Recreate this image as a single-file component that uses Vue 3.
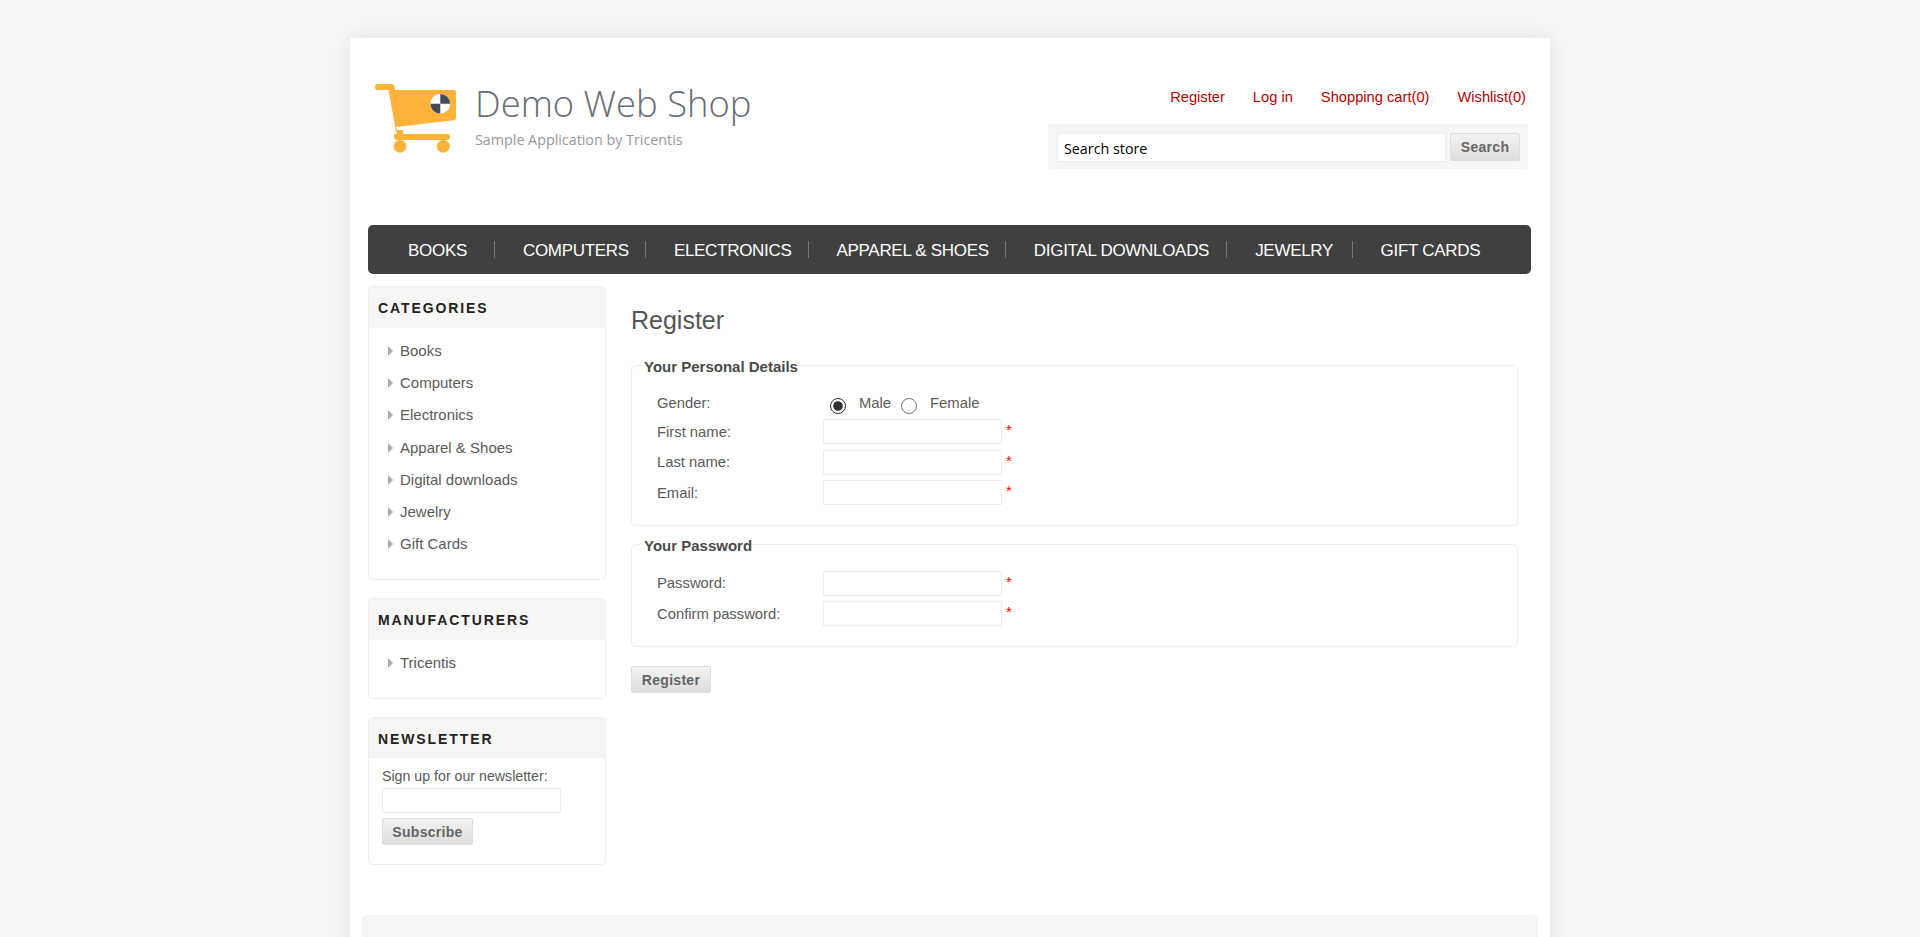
<template>
  <div class="page-frame">
    <div class="shop-page">
      <header class="shop-header">
        <div class="logo">
          <svg class="cart" width="82" height="70" viewBox="0 0 82 70">
            <path fill="#ffb239" d="M2.5 0H16q3 0 3.600 3L20 6H79q2 0 2 2V34q0 2-2 2.200L21 43l1 3 H28V50H72q3 0 3 3t-3 3H22q-3 0-3-3V50h2.500L13.500 6H2.500Q0 6 0 3t2.500-3Z" />
            <circle fill="#ffb239" cx="25" cy="62.300" r="6.400" />
            <circle fill="#ffb239" cx="68.300" cy="62.300" r="6.400" />
            <circle fill="#fff" cx="65.300" cy="19.700" r="9.800" />
            <path fill="#444c5a" d="M65.300 19.700V9.900A9.800 9.800 0 0 1 75.100 19.700ZM65.300 19.700V29.500A9.800 9.800 0 0 1 55.500 19.700Z" />
          </svg>
          <div class="logo-text">
            <div class="logo-title">Demo Web Shop</div>
            <div class="logo-sub">Sample Application by Tricentis</div>
          </div>
        </div>
        <div class="header-right">
          <ul class="header-links">
            <li v-for="link in headerLinks" :key="link"><a href="#">{{ link }}</a></li>
          </ul>
          <div class="search-box">
            <input class="search-input" type="text" value="Search store" />
            <button class="btn search-btn" type="button">Search</button>
          </div>
        </div>
      </header>

      <nav class="top-menu">
        <a v-for="item in menu" :key="item" class="top-item" href="#">{{ item }}</a>
      </nav>

      <div class="columns">
        <aside class="side">
          <section class="block categories">
            <h3 class="block-title">Categories</h3>
            <ul class="side-list">
              <li v-for="c in categories" :key="c"><a href="#">{{ c }}</a></li>
            </ul>
          </section>
          <section class="block manufacturers">
            <h3 class="block-title">Manufacturers</h3>
            <ul class="side-list">
              <li><a href="#">Tricentis</a></li>
            </ul>
          </section>
          <section class="block newsletter">
            <h3 class="block-title">Newsletter</h3>
            <div class="news-body">
              <label class="news-label">Sign up for our newsletter:</label>
              <input class="field news-field" type="text" />
              <button class="btn news-btn" type="button">Subscribe</button>
            </div>
          </section>
        </aside>

        <main class="center">
          <h1 class="page-title">Register</h1>
          <fieldset class="group personal">
            <legend>Your Personal Details</legend>
            <div class="row gender-row">
              <label class="row-label">Gender:</label>
              <div class="gender">
                <input type="radio" name="gender" checked />
                <span class="gender-text">Male</span>
                <input type="radio" name="gender" />
                <span class="gender-text">Female</span>
              </div>
            </div>
            <div v-for="f in personalFields" :key="f" class="row">
              <label class="row-label">{{ f }}:</label>
              <input class="field" type="text" />
              <span class="required">*</span>
            </div>
          </fieldset>
          <fieldset class="group password">
            <legend>Your Password</legend>
            <div v-for="f in passwordFields" :key="f" class="row">
              <label class="row-label">{{ f }}:</label>
              <input class="field" type="password" />
              <span class="required">*</span>
            </div>
          </fieldset>
          <button class="btn register-btn" type="button">Register</button>
        </main>
      </div>

      <div class="shop-footer"></div>
    </div>
  </div>
</template>

<script setup>
const headerLinks = ['Register', 'Log in', 'Shopping cart(0)', 'Wishlist(0)']
const menu = ['BOOKS', 'COMPUTERS', 'ELECTRONICS', 'APPAREL & SHOES', 'DIGITAL DOWNLOADS', 'JEWELRY', 'GIFT CARDS']
const categories = ['Books', 'Computers', 'Electronics', 'Apparel & Shoes', 'Digital downloads', 'Jewelry', 'Gift Cards']
const personalFields = ['First name', 'Last name', 'Email']
const passwordFields = ['Password', 'Confirm password']
</script>

<style>
html, body {
  background: #f6f6f4;
  overflow: hidden;
  height: 937px;
}
</style>

<style scoped>
.page-frame {
  width: 1900px;
  height: 937px;
  padding-top: 38px;
  box-sizing: border-box;
  overflow: hidden;
  font-family: "Liberation Sans", Arial, sans-serif;
  font-size: 15px;
  color: #5a5a5a;
}

.shop-page {
  width: 1200px;
  margin: 0 auto;
  background: #fff;
  box-shadow: 0 0 24px rgba(0, 0, 0, 0.09);
  height: 1000px;
  box-sizing: border-box;
  padding: 0 12px;
  display: flow-root;
}

.shop-header {
  display: flex;
  justify-content: space-between;
  height: 187px;
  padding: 0 10px 0 13px;
}

.logo {
  display: flex;
  margin-top: 46px;
  height: 70px;
}

.logo-text {
  margin-left: 18px;
}

.logo-title {
  font-family: "Open Sans", sans-serif;
  font-weight: 300;
  font-size: 36.400px;
  line-height: 48px;
  margin-top: -5px;
  color: #686d76;
}

.logo-sub {
  font-family: "Open Sans", sans-serif;
  font-size: 14.300px;
  line-height: 20px;
  margin-top: 3px;
  color: #96999d;
}

.header-right {
  width: 480px;
  display: flex;
  flex-direction: column;
  align-items: flex-end;
}

.header-links {
  list-style: none;
  margin: 50px 2px 0 0;
  padding: 0;
  display: flex;
  gap: 28px;
  font-size: 14.700px;
  line-height: 18px;
}

.header-links a {
  color: #bb0000;
  text-decoration: none;
}

.search-box {
  width: 480px;
  height: 45px;
  margin-top: 18px;
  box-sizing: border-box;
  background: #f6f6f4;
  border-radius: 3px;
  padding: 9px 8px 0 9px;
  display: flex;
  align-items: flex-start;
  gap: 4px;
}

.search-input {
  width: 389px;
  height: 29px;
  box-sizing: border-box;
  border: 1px solid #eee;
  background: #fff;
  padding: 1px 6px 0;
  margin: 0;
  font-family: "Open Sans", sans-serif;
  font-size: 14.300px;
  color: #000;
  outline: none;
}

.btn {
  box-sizing: border-box;
  border: 1px solid #ddd;
  border-radius: 2px;
  background: linear-gradient(#f2f2f2, #dedede);
  font-family: "Liberation Sans", Arial, sans-serif;
  font-weight: 700;
  font-size: 14px;
  letter-spacing: 0.3px;
  color: #666;
  padding: 0;
  margin: 0;
}

.search-btn {
  width: 70px;
  height: 28px;
}

.top-menu {
  height: 49px;
  background: #404040;
  border-radius: 5px;
  margin: 0 7px 0 6px;
  padding-left: 12px;
  display: flex;
  align-items: center;
}

.top-item {
  color: #fff;
  text-decoration: none;
  font-size: 17px;
  letter-spacing: -0.3px;
  line-height: 15px;
  padding: 2px 16px 0 28px;
  border-right: 1px solid #777;
}

.top-item:first-child {
  padding-right: 27px;
}

.top-item:nth-child(5) {
  padding-right: 17px;
}

.top-item:nth-child(6) {
  padding-right: 18.500px;
}

.top-item:last-child {
  border-right: 0;
}

.columns {
  display: flex;
  margin: 12px 6px 0;
  gap: 25px;
}

.side {
  width: 238px;
  flex: none;
  display: flex;
  flex-direction: column;
  gap: 18px;
}

.block {
  box-sizing: border-box;
  border: 1px solid #eee;
  border-radius: 5px;
  overflow: hidden;
}

.categories {
  height: 294px;
}

.manufacturers {
  height: 101px;
}

.newsletter {
  height: 148px;
}

.block-title {
  margin: 0;
  height: 41px;
  line-height: 43px;
  background: #f6f6f4;
  padding-left: 9px;
  font-size: 14px;
  font-weight: 700;
  letter-spacing: 1.900px;
  text-transform: uppercase;
  color: #222;
}

.newsletter .block-title {
  height: 40px;
}

.side-list {
  list-style: none;
  margin: 0;
  padding: 7px 0 0 31px;
}

.side-list li {
  height: 32.200px;
  line-height: 32px;
  position: relative;
}

.side-list li::before {
  content: "";
  position: absolute;
  left: -12px;
  top: 11px;
  border-left: 5px solid #aaa;
  border-top: 5px solid transparent;
  border-bottom: 5px solid transparent;
}

.side-list a {
  color: #5a5a5a;
  text-decoration: none;
}

.news-body {
  padding: 10px 0 0 13px;
  display: flex;
  flex-direction: column;
  align-items: flex-start;
}

.news-label {
  font-size: 14.200px;
  line-height: 16px;
}

.news-body .news-field {
  margin-top: 4px;
}

.news-btn {
  margin-top: 5px;
  width: 91px;
  height: 27px;
}

.center {
  flex: 1;
  min-width: 0;
  padding-right: 14px;
  font-size: 14.800px;
}

.page-title {
  margin: 16px 0 0;
  font-size: 25px;
  font-weight: 400;
  line-height: 36px;
  color: #555;
}

.group {
  margin: 0;
  padding: 0 0 0 25px;
  border: 1px solid #eee;
  border-radius: 5px;
  min-width: 0;
}

.personal {
  margin-top: 17px;
  height: 171px;
  box-sizing: border-box;
}

.password {
  margin-top: 8px;
  height: 113px;
  box-sizing: border-box;
}

.group legend {
  padding: 4px 0 0;
  margin-left: -13px;
  font-weight: 700;
  font-size: 15px;
  line-height: 16px;
  color: #4a4a4a;
}

.row {
  display: flex;
  align-items: center;
  height: 30.500px;
}

.row-label {
  width: 166px;
  flex: none;
}

.gender-row {
  height: 26.500px;
  margin-top: 15px;
}

.password .row:first-of-type {
  margin-top: 14px;
}

.gender {
  display: flex;
  align-items: center;
}

.gender input {
  width: 16px;
  height: 16px;
  margin: 6px 0 0 10px;
  accent-color: #333;
}

.gender input:first-child {
  margin-left: 7px;
}

.gender-text {
  margin: 0 0 0 13px;
}

.field {
  width: 179px;
  height: 25px;
  box-sizing: border-box;
  border: 1px solid #eee;
  background: #fff;
  padding: 0;
  margin: 0;
  outline: none;
}

.required {
  color: #f00;
  margin: -4px 0 0 4px;
  font-size: 15px;
}

.register-btn {
  margin-top: 19px;
  width: 80px;
  height: 27px;
}

.shop-footer {
  height: 100px;
  margin: 50px 0 0;
  background: #f6f6f4;
  border-radius: 5px;
}
</style>
